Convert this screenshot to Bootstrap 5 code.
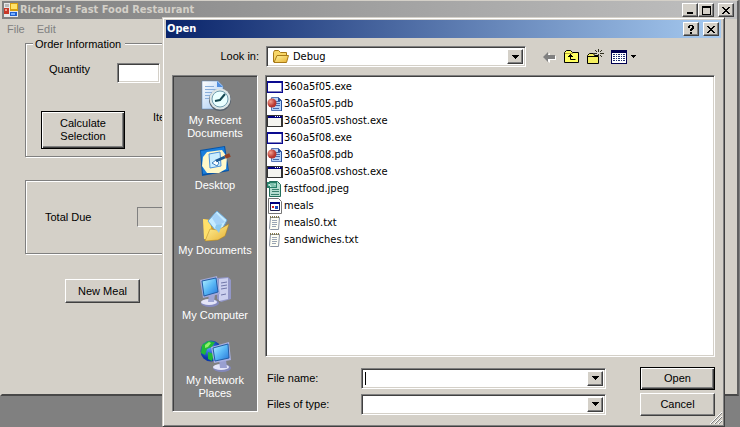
<!DOCTYPE html>
<html lang="en">
<head>
<meta charset="utf-8">
<meta name="viewport" content="width=device-width, initial-scale=1">
<title>Richard's Fast Food Restaurant</title>
<link href="https://cdn.jsdelivr.net/npm/bootstrap@5.3.0/dist/css/bootstrap.min.css" rel="stylesheet">
<style>
:root{--face:#d4d0c8;--shade:#808080;--dark:#404040;--tahoma:Tahoma,"DejaVu Sans Condensed","DejaVu Sans",sans-serif;--ms:"Liberation Sans",Arial,sans-serif}
body{background:#808080;color:#000;font:11px/13px var(--ms);min-height:100vh;overflow:hidden}
svg{display:block;flex:none}
button,input,select{font:inherit;color:#000;border-radius:0;padding:0;outline:0}
.app-window{background:var(--face);border:solid;border-width:1px 2px 2px;border-color:var(--face) #606060 #484848 var(--face);margin-right:1px;min-height:396px}
.title-strip{height:18px;padding:0 3px 0 2px;font:bold 11px/18px var(--tahoma);color:var(--face);background:linear-gradient(90deg,#808080,#c0c0c0)}
.title-strip h1,.title-strip h2{font:inherit;margin:0}
.title-strip h1{padding-left:2px}
.face-btn{background:var(--face);border:1px solid;border-color:#fff var(--dark) var(--dark) #fff;box-shadow:inset -1px -1px var(--shade);display:flex;align-items:center;justify-content:center}
.win-btn{width:16px;height:14px}
.menu-strip{padding:4px 5px;gap:12px;height:24px}
.menu-strip a{color:#808080;text-decoration:none}
.client{padding:0 23px}
.group-box{border:1px solid var(--shade);box-shadow:1px 1px #fff,inset 1px 1px #fff;position:relative;padding:0 15px}
.order-box{height:114px;padding-top:19px;margin-bottom:23px}
.total-box{height:74px;padding-top:26px;margin-bottom:25px}
.group-label{position:absolute;top:-6px;left:7px;padding:0 4px 0 2px;background:var(--face);margin:0;font:inherit}
.sunken{background:#fff;border:1px solid;border-color:var(--shade) #fff #fff var(--shade);box-shadow:inset 1px 1px var(--dark),inset -1px -1px var(--face)}
.qty-label{width:68px}
.total-label{width:92px}
.qty{width:43px;height:20px}
.total-field{background:var(--face);border:1px solid;border-color:var(--shade) #fff #fff var(--shade);width:90px;height:20px}
.default-btn{outline:1px solid #000;outline-offset:-1px;border-color:#000;box-shadow:inset 1px 1px #fff,inset -1px -1px var(--dark),inset -2px -2px var(--shade)}
.calc{width:84px;height:38px}
.meal{width:75px;height:24px;margin-left:40px}
.dialog-window{position:absolute;left:162px;right:15px;top:17px;background:var(--face);border:1px solid;border-color:var(--face) var(--dark) var(--dark) var(--face);box-shadow:inset 1px 1px #fff,inset -1px -1px var(--shade);padding:2px 3px 9px}
.dialog-window .title-strip{color:#fff;background:linear-gradient(90deg,#0a246a,#a6caf0);padding:0 2px 0 1px}
.look-row{padding:8px 6px 8px 9px;height:37px}
.look-label{width:84px;text-align:right;margin-right:7px}
.look-combo{flex:0 1 260px}
.combo{height:21px;padding:2px;display:flex;align-items:center}
.combo select,.combo input{flex:1 1 0;min-width:0;height:16px;border:0;background:#fff;appearance:none}
.combo select{padding-left:4px;font:11px/14px var(--tahoma)}
.drop{width:16px;align-self:stretch}
.tool{border:0;background:transparent;height:18px}
.tools{margin-left:16px;gap:7px}
.dialog-main{padding:0 6px;gap:7px}
.places{width:86px;background:#808080;padding:2px 2px 8px;box-shadow:inset 1px 1px var(--dark);border:1px solid;border-color:var(--shade) #fff #fff var(--shade)}
.place{height:65px;color:#fff;text-decoration:none;text-align:center;padding-top:2px}
.place svg{margin:0 auto 2px}
.files{height:282px;padding:2px 1px;margin-bottom:8px}
.file-row{height:17px;gap:1px;font:11px/17px var(--tahoma)}
.entry-row{height:26px}
.entry-row label{width:96px;padding-left:2px}
.caret{width:1px;height:13px;background:#000;margin-left:1px}
.entry-combo{flex:1 1 0;margin-right:34px}
.action{width:75px;height:23px}
.grip{position:absolute;right:2px;bottom:2px}
</style>
<script src="https://cdn.jsdelivr.net/npm/bootstrap@5.3.0/dist/js/bootstrap.bundle.min.js"></script>
</head>
<body>
<svg width="0" height="0" class="position-absolute" aria-hidden="true">
<defs>
<linearGradient id="screen" x2="1" y2="1"><stop stop-color="#b8f4ff"/><stop offset=".5" stop-color="#5ab8f6"/><stop offset="1" stop-color="#2473d8"/></linearGradient>
<linearGradient id="gold" x2="1" y2="1"><stop stop-color="#fff5a0"/><stop offset="1" stop-color="#e8b030"/></linearGradient>
<linearGradient id="paper" x2="1" y2="1"><stop stop-color="#fff"/><stop offset="1" stop-color="#9fc6f2"/></linearGradient>
<radialGradient id="ball" cx=".35" cy=".35"><stop stop-color="#f4a090"/><stop offset="1" stop-color="#b83830"/></radialGradient>
<radialGradient id="globe" cx=".4" cy=".35"><stop stop-color="#5c9cff"/><stop offset="1" stop-color="#0838a8"/></radialGradient>
<symbol id="exe" viewBox="0 0 16 16"><path fill="#0a0a90" d="M0 2h16v12H0z"/><path fill="#fff" d="M1 4h13v8H1z"/><path fill="#8080c0" d="M14 4h1v9H1v-1h13z"/></symbol>
<symbol id="host" viewBox="0 0 16 16"><path fill="#333" d="M0 2h16v12H0z"/><path fill="#f4f4f0" d="M1 5h13v8H1z"/><path fill="#000080" d="M1 3h14v2H1z"/><path fill="#fff" d="M8 3h1v1H8zm2 0h1v1h-1zm2 0h1v1h-1z"/></symbol>
<symbol id="pdb" viewBox="0 0 16 16"><path fill="#b8d4f8" stroke="#5878b8" d="M4.500 1.500h7l3 3v10h-10z"/><path fill="#28509c" d="M11 1l4 4v10h-1V5h-3z"/><path stroke="#486cac" d="M8 5.500h5M8 7.500h5M8 9.500h5M6 12.500h6"/><circle cx="5" cy="7" r="4.500" fill="url(#ball)"/></symbol>
<symbol id="jpeg" viewBox="0 0 16 16"><path fill="#b6ddd0" stroke="#24705c" d="M2.500 .500h8l3 3v12h-11z"/><path fill="#268068" d="M0 1h10v6H0z"/><path d="M2 5V3l2 3V2m2 0v4m1-3h2m-1 0v3" stroke="#d8fff0" fill="none"/><path d="M5 8.500h7M5 10.500h7M4 13.500h8" stroke="#397f6d"/></symbol>
<symbol id="meal-file" viewBox="0 0 16 16"><path fill="#fff" stroke="#777" d="M1.500 .500h10l3 3v12h-13z"/><path fill="#fff" stroke="#202050" d="M3.500 4.500h9v8h-9z"/><path fill="#000080" d="M3 4h10v2H3z"/><path fill="#d02020" d="M5 8h2v2H5z"/><path fill="#2048c0" d="M8 8h3v3H8z"/></symbol>
<symbol id="txt" viewBox="0 0 16 16"><path fill="#fdfdf4" stroke="#8993a2" d="M3.500 2.500h9l-1 12h-8q-1 0-1-1z"/><path stroke="#83784a" stroke-width="2" stroke-dasharray="1 1" d="M3 2h10"/><path stroke="#9aa5b4" d="M5 5.500h5M5 7.500h5M5 9.500h5M5 11.500h4"/></symbol>
<symbol id="down" viewBox="0 0 7 4"><path d="M0 0h7v1H6v1H5v1H4v1H3V3H2V2H1V1H0z"/></symbol>
<symbol id="close" viewBox="0 0 8 7"><path d="M0 0h2v1h1v1h2V1h1V0h2v1H7v1H6v1H5v1h1v1h1v1h1v1H6V6H5V5H3v1H2v1H0V6h1V5h1V4h1V3H2V2H1V1H0z"/></symbol>
</defs>
</svg>

<main class="app-window">
  <header class="title-strip d-flex align-items-center">
    <svg width="14" height="14" viewBox="0 0 14 14" aria-hidden="true"><path fill="#e8e8e8" d="M0 0h14v14H0z"/><path fill="#b8b8b8" d="M1 1h4v3H1z"/><path fill="#c83828" d="M0 5h5v6H0z"/><path fill="#f0a090" d="M1 6h2v2H1z"/><path fill="#d8a010" d="M6 0h8v8H6z"/><path fill="#ffe268" d="M7 1h6v5H7z"/><path fill="#2060d0" d="M6 9h7v4H6z"/><path fill="#78b0ff" d="M7 10h4v2H7z"/></svg>
    <h1 class="me-auto text-nowrap">Richard's Fast Food Restaurant</h1>
    <button class="face-btn win-btn" aria-label="Minimize"><svg width="8" height="8"><path d="M1 6h6v2H1z"/></svg></button>
    <button class="face-btn win-btn" aria-label="Maximize"><svg width="9" height="9"><path fill-rule="evenodd" d="M0 0h9v9H0zM1 2v6h7V2z"/></svg></button>
    <button class="face-btn win-btn ms-1" aria-label="Close"><svg width="8" height="7"><use href="#close"/></svg></button>
  </header>
  <nav class="menu-strip d-flex" aria-label="Main"><a href="#">File</a><a href="#">Edit</a></nav>
  <form class="client">
    <section class="group-box order-box">
      <h2 class="group-label">Order Information</h2>
      <div class="d-flex ps-2 mb-4 pb-1">
        <label for="qty" class="qty-label">Quantity</label>
        <input id="qty" class="sunken qty">
      </div>
      <div class="d-flex">
        <button type="button" class="face-btn default-btn calc">Calculate<br>Selection</button>
        <span class="ms-4 ps-1">Items</span>
      </div>
    </section>
    <section class="group-box total-box">
      <div class="d-flex align-items-center ps-1">
        <label for="total" class="total-label">Total Due</label>
        <input id="total" class="total-field" readonly>
      </div>
    </section>
    <button type="button" class="face-btn meal">New Meal</button>
  </form>
</main>

<div class="dialog-window" role="dialog" aria-labelledby="dlg-title">
  <header class="title-strip d-flex align-items-center">
    <h2 id="dlg-title" class="me-auto">Open</h2>
    <button class="face-btn win-btn" aria-label="Help"><svg width="6" height="9"><path d="M1 0h4v1h1v3H5v1H4v1H2V4h1V3h1V1H2v2H0V1h1zM2 7h2v2H2z"/></svg></button>
    <button class="face-btn win-btn ms-1" aria-label="Close"><svg width="8" height="7"><use href="#close"/></svg></button>
  </header>
  <div class="look-row d-flex align-items-center">
    <label for="look" class="look-label">Look in:</label>
    <div class="combo sunken look-combo">
      <svg class="ms-1" width="16" height="14" viewBox="0 0 16 14" aria-hidden="true"><path fill="#f8d768" stroke="#a87a18" d="M.500 12v-9.500l1-2h4l2 2h6v3"/><path fill="url(#gold)" stroke="#a87a18" d="M1 12.500l3-7h11.500l-2 7z"/></svg>
      <select id="look"><option>Debug</option></select>
      <span class="face-btn drop"><svg width="7" height="4"><use href="#down"/></svg></span>
    </div>
    <div class="tools d-flex">
      <button class="tool" aria-label="Back"><svg width="15" height="18"><path fill="#fff" d="M2 10l6-5v3h6v4H8v3z"/><path fill="#808080" d="M1 9l5-5v3h7v4H6v3z"/></svg></button>
      <button class="tool" aria-label="Up one level"><svg width="16" height="18"><path fill="#ffff60" stroke="#000" d="M.500 14.500v-10l2-2h4l2 2h6v10z"/><path d="M1 5.500h8" stroke="#b8a840"/><path fill="none" stroke="#000" stroke-width="1" d="M6.500 6v5.500h5M4 8.500h5M5 7.500h3"/></svg></button>
      <button class="tool" aria-label="New folder"><svg width="17" height="18"><path fill="#f4ef60" stroke="#000" d="M.500 15.500v-8l2-2h4l1 2h4v8z"/><path stroke="#000" d="M1 8.500h10"/><path d="M11.500 1v3M11.500 6v3M7 5.500h3M13 5.500h4M8 2l2 2M15 2l-2 2M13 7l2 2" stroke="#303020"/></svg></button>
      <button class="tool d-flex align-items-center gap-1" aria-label="View"><svg width="16" height="18"><path fill="#000050" d="M0 2h16v14H0z"/><path fill="#fff" d="M1 5h14v10H1z"/><path stroke="#203070" stroke-width="1" stroke-dasharray="2 1 1 1" d="M2 6.500h12M2 8.500h12M2 10.500h12M2 12.500h12"/></svg><svg width="5" height="3"><path d="M0 0h5v1H4v1H3v1H2V2H1V1H0z"/></svg></button>
    </div>
  </div>
  <div class="dialog-main d-flex align-items-start">
    <nav class="places flex-shrink-0" aria-label="Places">
      <a class="place d-block" href="#"><svg width="32" height="32"><path fill="url(#paper)" stroke="#5580b4" stroke-width=".500" d="M3 1h16l5 5v23H3z"/><path fill="#4f8ee0" d="M18 1l6 6h-6z"/><path stroke="#88aedb" d="M6 6.500h9M6 9.500h13M6 12.500h9M6 15.500h7M6 18.500h6"/><circle cx="21" cy="20" r="11" fill="#55606c"/><circle cx="21" cy="19" r="10.500" fill="#dce5e6"/><circle cx="21" cy="19" r="8" fill="#eaffff" stroke="#719daf"/><path stroke="#154852" stroke-width="2" fill="none" d="M26 14l-5 6-5 1"/></svg>My Recent<br>Documents</a>
      <a class="place d-block" href="#"><svg width="32" height="32"><path fill="#0754a6" d="M1 5L26 1l4 25L3 31z"/><path fill="#1a7edd" d="M2 6L25 2l4 23-25 4z"/><path fill="#fff8c9" d="M8 7l15-2 5 7-1 12-7 4H8l-5-7 1-9z"/><path fill="#c9edff" stroke="#4b91da" d="M10 9l11-2 1 14-11 2z"/><path fill="#fff" stroke="#3c7fc0" stroke-width="1" d="M13 18l4-3 3 3-2 3z"/><path stroke="#1c5891" stroke-width="3" d="M17 16l9-4"/><path stroke="#914025" stroke-width="4" d="M26 12l5-2"/></svg>Desktop</a>
      <a class="place d-block" href="#"><svg width="32" height="32"><path fill="#d39b23" d="M4 9l9 1 4 20-11 1z"/><path fill="#ffe06a" d="M4 9l7 1 3 20-9-1z"/><path fill="#c5ebff" stroke="#6ba9d9" d="M9 11L18 1l10 9-8 15z"/><path fill="#a5d2f8" d="M17 3l9 9-8 4-5-8z"/><path fill="url(#gold)" stroke="#b18018" stroke-width=".500" d="M6 31l5-12 8 1 11-6-4 12-7 4z"/><path fill="#8cc9ef" d="M17 15l6-1-3 9-4-5z"/></svg>My Documents</a>
      <a class="place d-block" href="#"><svg width="32" height="32"><path fill="#9397c8" d="M18 3l11-1 3 3v19l-10 3-4-3z"/><path fill="#ccd0ef" d="M20 4l9-1v21l-9 2z"/><path stroke="#7177a9" d="M22 8l6-1M22 11l6-1M22 14l6-1M22 20l5-1"/><ellipse cx="11" cy="28" rx="9" ry="4" fill="#858abd"/><ellipse cx="10" cy="27" rx="8" ry="3" fill="#e4e5f8"/><path fill="#9fa6d5" d="M10 19h6l-1 8H9z"/><path fill="#a3a9d9" d="M1 5L18 1l3 18-17 4z"/><path fill="url(#screen)" stroke="#225da4" d="M3 6l14-3 2 14-14 4z"/></svg>My Computer</a>
      <a class="place d-block" href="#"><svg width="32" height="32"><circle cx="12" cy="11" r="10.500" fill="url(#globe)"/><path fill="#20b838" d="M3 5l6-4 7 1-3 5-5 2-2 6-4-2zM9 12l6 2-2 7-4-2z"/><path fill="#8ef06c" d="M6 5l4-3 2 1-3 4-3 1z"/><ellipse cx="23" cy="28" rx="9" ry="4" fill="#8287ba"/><ellipse cx="22" cy="27" rx="8" ry="3" fill="#e4e5f8"/><path fill="#999fd0" d="M20 20h7l1 8h-7z"/><path fill="#a8afe0" d="M12 7l18-5 2 18-17 3z"/><path fill="url(#screen)" stroke="#225da4" d="M14 8l15-4 1 14-14 3z"/></svg>My Network<br>Places</a>
    </nav>
    <div class="flex-grow-1 d-flex flex-column">
      <ul class="files sunken list-unstyled">
        <li class="file-row d-flex align-items-center"><svg width="16" height="16"><use href="#exe"/></svg>360a5f05.exe</li>
        <li class="file-row d-flex align-items-center"><svg width="16" height="16"><use href="#pdb"/></svg>360a5f05.pdb</li>
        <li class="file-row d-flex align-items-center"><svg width="16" height="16"><use href="#host"/></svg>360a5f05.vshost.exe</li>
        <li class="file-row d-flex align-items-center"><svg width="16" height="16"><use href="#exe"/></svg>360a5f08.exe</li>
        <li class="file-row d-flex align-items-center"><svg width="16" height="16"><use href="#pdb"/></svg>360a5f08.pdb</li>
        <li class="file-row d-flex align-items-center"><svg width="16" height="16"><use href="#host"/></svg>360a5f08.vshost.exe</li>
        <li class="file-row d-flex align-items-center"><svg width="16" height="16"><use href="#jpeg"/></svg>fastfood.jpeg</li>
        <li class="file-row d-flex align-items-center"><svg width="16" height="16"><use href="#meal-file"/></svg>meals</li>
        <li class="file-row d-flex align-items-center"><svg width="16" height="16"><use href="#txt"/></svg>meals0.txt</li>
        <li class="file-row d-flex align-items-center"><svg width="16" height="16"><use href="#txt"/></svg>sandwiches.txt</li>
      </ul>
      <div class="entry-row d-flex align-items-center">
        <label for="fname">File name:</label>
        <div class="combo sunken entry-combo"><span class="caret"></span><input id="fname"><button class="face-btn drop" aria-label="Recent names"><svg width="7" height="4"><use href="#down"/></svg></button></div>
        <button class="face-btn default-btn action">Open</button>
      </div>
      <div class="entry-row d-flex align-items-center">
        <label for="ftype">Files of type:</label>
        <div class="combo sunken entry-combo"><select id="ftype"><option></option></select><span class="face-btn drop"><svg width="7" height="4"><use href="#down"/></svg></span></div>
        <button class="face-btn action">Cancel</button>
      </div>
    </div>
  </div>
  <svg class="grip" width="12" height="12" aria-hidden="true"><path stroke="#fff" d="M0 12L12 0M4 12l8-8M8 12l4-4"/><path stroke="#808080" d="M1 12L12 1M5 12l7-7M9 12l3-3"/></svg>
</div>
</body>
</html>
